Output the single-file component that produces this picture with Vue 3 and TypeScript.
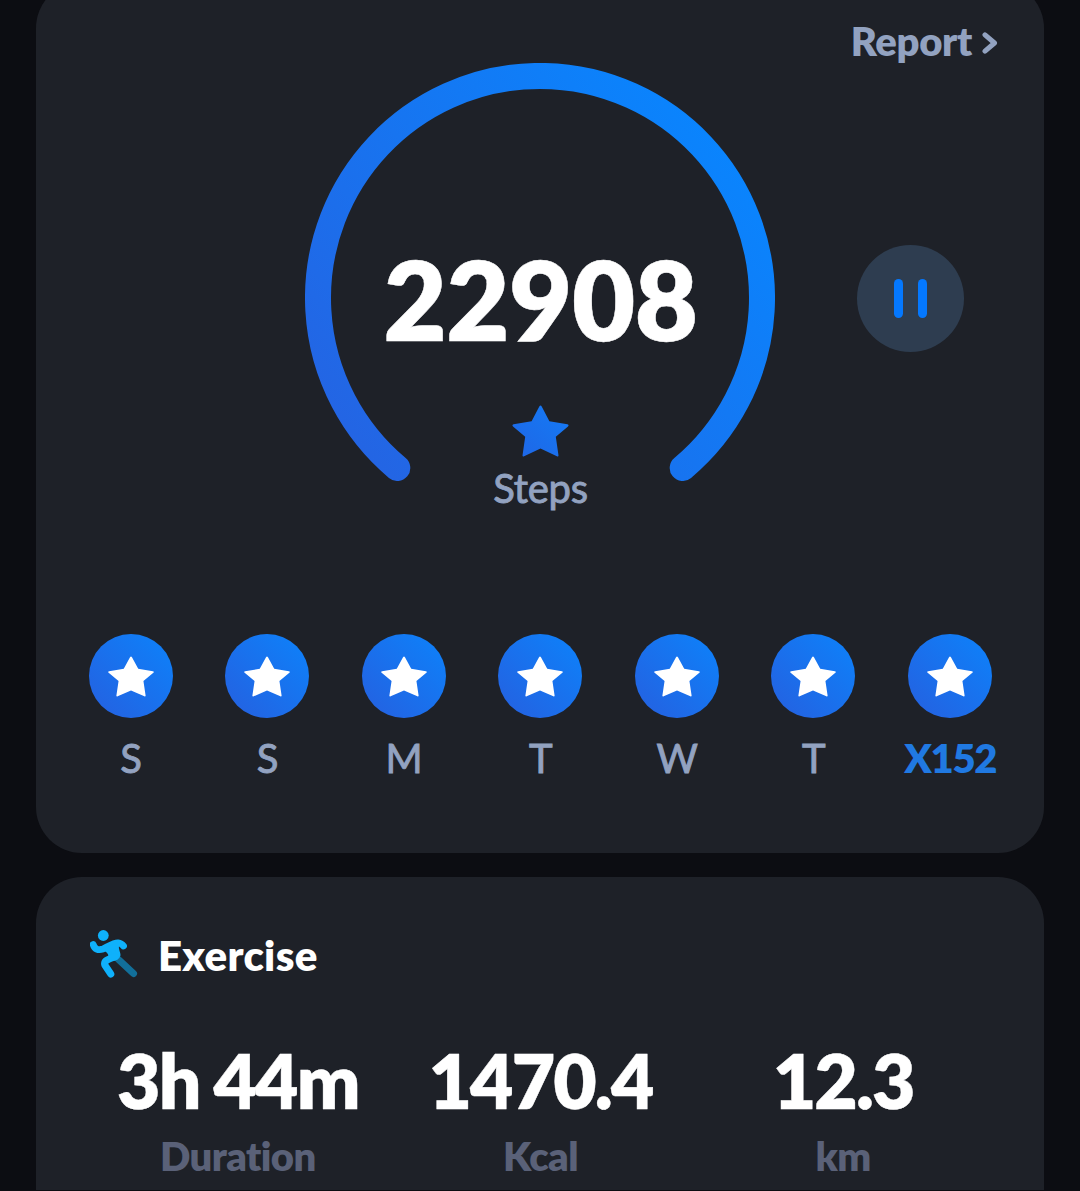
<script setup lang="ts">
interface Day {
  label: string
  current?: boolean
}

interface Stat {
  value: string
  unit: string
}

const steps = 22908

const days: Day[] = [
  { label: 'S' },
  { label: 'S' },
  { label: 'M' },
  { label: 'T' },
  { label: 'W' },
  { label: 'T' },
  { label: 'X152', current: true },
]

const stats: Stat[] = [
  { value: '3h 44m', unit: 'Duration' },
  { value: '1470.4', unit: 'Kcal' },
  { value: '12.3', unit: 'km' },
]

const starPath =
  'M27.1 1.6Q28.3 -.6 29.5 1.6L37.2 16.2L55.2 19.3Q57.2 19.9 55.8 21.4L43.6 31.8L46.3 50.4Q46.2 51.9 44.7 51.2L28.3 43.6L11.9 51.2Q10.4 51.9 10.3 50.4L13 31.8L.8 21.4Q-.6 19.9 1.4 19.3L19.4 16.2Z'
</script>

<template>
  <main class="screen">
    <section class="card steps-card">
      <header class="report">
        <span>Report</span>
        <svg class="chevron" width="16" height="22" viewBox="0 0 16 22">
          <path d="M3 2.8L12.500 11L3 19.200" />
        </svg>
      </header>

      <div class="hero">
        <div class="gauge">
          <svg class="ring" width="470" height="418" viewBox="0 0 470 418">
            <defs>
              <linearGradient id="ringFill" gradientUnits="userSpaceOnUse" x1="60" y1="410" x2="430" y2="100">
                <stop offset="0" stop-color="#2464e3" />
                <stop offset="1" stop-color="#0a84fd" />
              </linearGradient>
            </defs>
            <path d="M92.300 405A222 222 0 1 1 377.700 405" stroke="url(#ringFill)" />
          </svg>
          <div class="reading">
            <strong class="count">{{ steps }}</strong>
            <svg class="goal-star" width="57" height="52" viewBox="0 0 56.6 52">
              <defs>
                <linearGradient id="starFill" x1="0" y1="1" x2="1" y2="0">
                  <stop offset="0" stop-color="#1f66e6" />
                  <stop offset="1" stop-color="#147bf5" />
                </linearGradient>
              </defs>
              <path :d="starPath" fill="url(#starFill)" />
            </svg>
            <span class="caption">Steps</span>
          </div>
        </div>
        <button class="pause" type="button" aria-label="Pause">
          <i></i>
          <i></i>
        </button>
      </div>

      <ul class="week">
        <li v-for="(day, i) in days" :key="i" :class="{ current: day.current }">
          <span class="badge">
            <svg width="46" height="41" viewBox="0 0 56.6 52" preserveAspectRatio="none">
              <path :d="starPath" fill="#fff" />
            </svg>
          </span>
          <span class="day">{{ day.label }}</span>
        </li>
      </ul>
    </section>

    <section class="card exercise-card">
      <h2 class="title">
        <svg width="48" height="48" viewBox="0 0 48 48" fill="none" stroke-linecap="round" stroke-linejoin="round">
          <path d="M28.500 29.500L43.500 43.500" stroke="#126f99" stroke-width="7" />
          <circle cx="13.300" cy="5.500" r="5.400" fill="#0fb1fb" />
          <path d="M3.200 14.500C4.500 19 8 20.600 13 19C19 16 24 12.500 28 12.800Q31.500 13.200 33.500 16" stroke="#0fb1fb" stroke-width="6.800" />
          <path d="M16 19.500L27 15.500C26 20 28.500 22 28.500 25C27.500 29 23 29 20 29.500Q22 23 16 19.500Z" fill="#0fb1fb" stroke="#0fb1fb" stroke-width="4" />
          <path d="M25 27C18 29 13.500 31 14.800 35L20.800 44" stroke="#0fb1fb" stroke-width="7" />
        </svg>
        <span>Exercise</span>
      </h2>
      <div class="stats">
        <div v-for="stat in stats" :key="stat.unit" class="stat">
          <strong>{{ stat.value }}</strong>
          <span>{{ stat.unit }}</span>
        </div>
      </div>
    </section>
  </main>
</template>

<style>
body {
  background: #0c0d12;
}
</style>

<style scoped>
.screen {
  box-sizing: border-box;
  height: 1190px;
  overflow: hidden;
  padding: 0 36px;
  background: #0c0d12;
  font-family: Lato, sans-serif;
  font-variant-ligatures: none;
  display: flex;
  flex-direction: column;
  gap: 24px;
}

.card {
  box-sizing: border-box;
  flex: none;
  border-radius: 46px;
  background: #1e2128;
}

.steps-card {
  height: 871px;
  margin-top: -18px;
  padding-top: 35px;
}

.report {
  height: 46px;
  padding-right: 46px;
  display: flex;
  justify-content: flex-end;
  gap: 10px;
  color: #92a2c0;
  font-size: 40px;
  line-height: 48px;
  font-weight: 800;
  letter-spacing: -0.35px;
}

.chevron {
  margin-top: 15px;
  fill: none;
  stroke: currentColor;
  stroke-width: 5;
  stroke-linecap: round;
  stroke-linejoin: round;
}

.hero {
  height: 470px;
  display: grid;
  grid-template-columns: 269px 470px 269px;
}

.gauge {
  grid-column: 2;
  display: grid;
}

.gauge > * {
  grid-area: 1 / 1;
}

.ring {
  fill: none;
  stroke-width: 26;
  stroke-linecap: round;
}

.reading {
  padding-top: 168px;
  display: flex;
  flex-direction: column;
  align-items: center;
}

.count {
  height: 134px;
  margin-left: 1px;
  color: #fff;
  font-size: 109px;
  line-height: 136px;
  font-weight: 800;
  letter-spacing: -0.4px;
  -webkit-text-stroke: 0.5px currentColor;
}

.goal-star {
  margin: 40px 0 0;
}

.caption {
  margin: 7px 0 0 1px;
  color: #92a2c0;
  font-size: 40px;
  line-height: 48px;
  letter-spacing: -0.25px;
  -webkit-text-stroke: 0.9px currentColor;
}

.pause {
  width: 107px;
  height: 107px;
  margin: 182px 0 0 82px;
  padding: 0;
  border: 0;
  border-radius: 50%;
  background: #2e3d50;
  display: flex;
  align-items: center;
  justify-content: center;
  gap: 15px;
}

.pause i {
  width: 9px;
  height: 39px;
  border-radius: 5px;
  background: #0478ff;
}

.week {
  margin: 101px 26px 0 26.4px;
  padding: 0;
  list-style: none;
  display: grid;
  grid-template-columns: repeat(7, 1fr);
}

.week li {
  display: flex;
  flex-direction: column;
  align-items: center;
}

.badge {
  width: 84px;
  height: 84px;
  border-radius: 50%;
  background: linear-gradient(45deg, #2363e2 10%, #0f7ff8 90%);
  display: flex;
  align-items: center;
  justify-content: center;
}

.day {
  margin: 16px 0 0 1px;
  color: #92a2c0;
  font-size: 40px;
  line-height: 48px;
  -webkit-text-stroke: 0.9px currentColor;
}

.current .day {
  color: #2079e2;
  font-weight: 800;
  letter-spacing: -1.3px;
  -webkit-text-stroke: 0;
}

.exercise-card {
  height: 360px;
  padding: 52px 50px 0;
}

.title {
  height: 50px;
  margin: 0 0 0 4px;
  display: flex;
  align-items: center;
  gap: 20px;
  color: #fff;
  font-size: 42px;
  line-height: 50px;
  font-weight: 800;
  letter-spacing: 0.3px;
}

.title span {
  padding-top: 2px;
}

.stats {
  margin-top: 55px;
  display: grid;
  grid-template-columns: repeat(3, 1fr);
}

.stat {
  display: flex;
  flex-direction: column;
  align-items: center;
}

.stat strong {
  margin-left: 1px;
  color: #fff;
  font-size: 75px;
  line-height: 93px;
  font-weight: 800;
  letter-spacing: -1.9px;
  word-spacing: -1.5px;
  white-space: nowrap;
  -webkit-text-stroke: 0.4px currentColor;
}

.stat span {
  margin: 5px 0 0 1px;
  color: #5a6178;
  font-size: 40px;
  line-height: 48px;
  font-weight: 800;
  letter-spacing: -0.6px;
}
</style>
